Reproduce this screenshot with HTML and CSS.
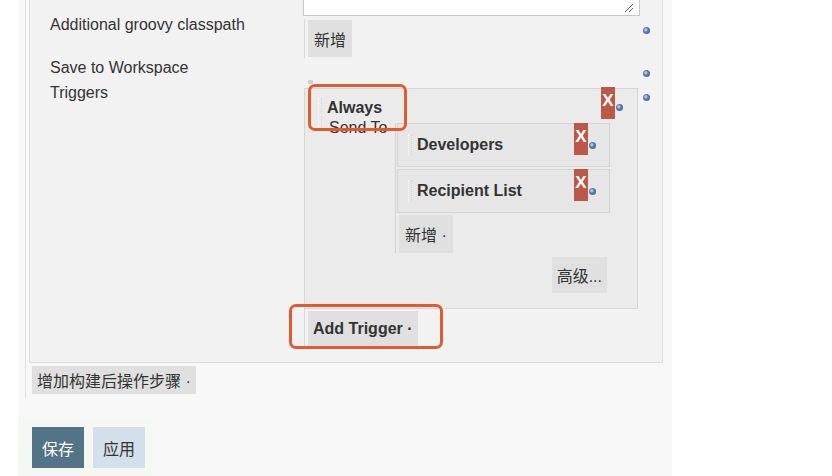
FILE: index.html
```html
<!DOCTYPE html>
<html lang="zh-CN">
<head>
<meta charset="UTF-8">
<title>配置</title>
<link rel="stylesheet" href="styles.css">
</head>
<body>
  <div class="page">
    <div class="section">
      <div class="config-box">
        <div class="form-grid">
          <!-- textarea tail -->
          <div></div>
          <div class="textarea-tail">
            <svg class="resize" width="10" height="10" viewBox="0 0 10 10">
              <line x1="1" y1="9" x2="9" y2="1" stroke="#666" stroke-width="1"/>
              <line x1="5" y1="9" x2="9" y2="5" stroke="#666" stroke-width="1"/>
            </svg>
          </div>
          <div></div>

          <div class="label row1">Additional groovy classpath</div>
          <div class="field row1">
            <div class="chunk">
              <button class="btn">新增</button>
            </div>
          </div>
          <div class="help-cell"><span class="help"></span></div>

          <div class="label row2">Save to Workspace</div>
          <div class="field row2"></div>
          <div class="help-cell"><span class="help"></span></div>

          <div class="label row3">Triggers</div>
          <div class="field row3">
            <div class="dot"></div>
            <div class="trigger">
              <div class="trigger-head">
                <span class="handle"></span>
                <span class="title">Always</span>
              </div>
              <span class="delete">X</span>
              <span class="help in-trigger"></span>
              <div class="trigger-body">
                <div class="sub-label">Send To</div>
                <div class="recipients">
                  <div class="recipient">
                    <span class="handle small"></span>
                    <span class="title">Developers</span>
                    <span class="delete">X</span>
                    <span class="help in-recipient"></span>
                  </div>
                  <div class="recipient">
                    <span class="handle small"></span>
                    <span class="title">Recipient List</span>
                    <span class="delete">X</span>
                    <span class="help in-recipient"></span>
                  </div>
                  <button class="btn add-recipient">新增 ·</button>
                </div>
              </div>
              <div class="advanced-row">
                <button class="btn advanced">高级...</button>
              </div>
            </div>
            <div class="chunk add-chunk">
              <button class="btn bold">Add Trigger ·</button>
            </div>
          </div>
          <div class="help-cell row3-help"><span class="help"></span></div>
        </div>
      </div>
      <button class="btn post-build">增加构建后操作步骤 ·</button>
    </div>

    <div class="footer">
      <button class="btn save">保存</button>
      <button class="btn apply">应用</button>
    </div>
  </div>

  <div class="highlight hl-always"></div>
  <div class="highlight hl-add"></div>
</body>
</html>
```

FILE: styles.css
```css
body {
  margin: 0;
  background: #fff;
  font-family: "Liberation Sans", "Noto Sans CJK SC", sans-serif;
  font-size: 16px;
  color: #333;
  position: relative;
}
.page {
  margin-left: 18px;
  width: 654px;
  min-height: 476px;
  background: #f8f8f8;
}
.section {
  margin-left: 7px;
  border-left: 1px solid #e2e2e2;
  padding-left: 3px;
  padding-bottom: 4px;
}
.config-box {
  width: 634px;
  box-sizing: border-box;
  background: #f2f2f2;
  border: 1px solid #dcdcdc;
  border-top: none;
  padding-bottom: 14px;
}
.form-grid {
  display: grid;
  grid-template-columns: 273px 337px 1fr;
}
.textarea-tail {
  height: 15px;
  background: #fff;
  border: 1px solid #c8c8c8;
  border-top: none;
  position: relative;
}
.resize {
  position: absolute;
  right: 5px;
  bottom: 2px;
}
.label {
  padding-left: 20px;
  line-height: 18px;
}
.label.row2 {
  height: 20px;
}
.label.row3 {
  padding-top: 5px;
}
.field.row1 {
  padding-top: 3px;
  padding-bottom: 1px;
}
.help-cell {
  padding-top: 11px;
  padding-left: 3px;
}
.row3-help {
  padding-top: 15px;
}
.help {
  display: block;
  width: 7px;
  height: 7px;
  border-radius: 50%;
  background: radial-gradient(circle at 40% 40%, #b5c6e4 0 1px, #5c7db6 2px, #3e5c94 100%);
}
.chunk {
  margin-left: 1px;
  border-left: 1px solid #d9d9d9;
  padding: 1px 0;
}
.chunk .btn {
  margin-left: 3px;
}
.btn {
  display: inline-block;
  border: none;
  background: #e0e0e0;
  color: #333;
  font-family: "Liberation Sans", "Noto Sans CJK SC", sans-serif;
  font-size: 16px;
  padding: 0 6px;
  height: 37px;
  vertical-align: top;
}
.btn.bold {
  font-weight: bold;
  padding: 0 5px;
  height: 36px;
}
.dot {
  margin: 1px 0 0 5px;
  width: 5px;
  height: 4px;
  border-radius: 1px;
  background: #d0d0d0;
}
.trigger {
  position: relative;
  margin: 4px 0 0 1px;
  width: 334px;
  box-sizing: border-box;
  background: #ebebeb;
  border: 1px solid #d6d6d6;
  padding: 9px 0 15px 0;
}
.trigger-head {
  display: flex;
  align-items: flex-start;
  height: 25px;
}
.handle {
  display: block;
  width: 2px;
  height: 30px;
  margin-left: 13px;
  margin-right: 5px;
  border-left: 1px dotted #fafafa;
  border-right: 1px dotted #d8d8d8;
}
.title {
  font-weight: bold;
  line-height: 20px;
}
.delete {
  position: absolute;
  top: -2px;
  right: 22px;
  width: 14px;
  height: 32px;
  background: #bb5847;
  color: #fff;
  font-weight: bold;
  font-size: 17px;
  line-height: 28px;
  text-align: center;
}
.help.in-trigger {
  position: absolute;
  right: 14px;
  top: 15px;
}
.trigger-body {
  display: flex;
  padding-left: 24px;
}
.sub-label {
  width: 66px;
  margin-top: -4px;
  line-height: 18px;
}
.recipients {
  border-left: 1px solid #d2d2d2;
  padding-left: 1px;
  width: 213px;
}
.recipient {
  position: relative;
  display: flex;
  align-items: center;
  height: 44px;
  box-sizing: border-box;
  background: #e6e6e6;
  border: 1px solid #d4d4d4;
  margin-bottom: 2px;
}
.recipient .handle {
  height: 22px;
  margin-left: 10px;
  margin-right: 5px;
}
.recipient .delete {
  top: -1px;
  right: 21px;
}
.help.in-recipient {
  position: absolute;
  right: 13px;
  top: 18px;
}
.add-recipient {
  margin: 0 0 0 2px;
  height: 38px;
}
.advanced-row {
  margin-top: 4px;
  text-align: right;
  padding-right: 30px;
}
.advanced {
  height: 36px;
  padding: 0 5px;
}
.add-chunk {
  padding: 2px 0 1px 0;
}
.add-chunk .btn {
  margin-left: 3px;
}
.post-build {
  margin: 3px 0 0 3px;
  height: 28px;
  padding: 0 5px;
}
.footer {
  margin-top: 19px;
  width: 134px;
  box-sizing: border-box;
  background: #f4f7f2;
  padding: 10px 0 0 14px;
  display: flex;
  gap: 9px;
  height: 59px;
}
.save, .apply {
  height: 41px;
  padding: 0 10px;
}
.save {
  background: #537386;
  color: #fff;
}
.apply {
  background: #d3dfeb;
  color: #333;
}
.highlight {
  position: absolute;
  box-sizing: border-box;
  border: 3px solid #e05c30;
  border-radius: 7px;
}
.hl-always {
  left: 308px;
  top: 84px;
  width: 99px;
  height: 47px;
}
.hl-add {
  left: 289px;
  top: 304px;
  width: 154px;
  height: 45px;
}
```
